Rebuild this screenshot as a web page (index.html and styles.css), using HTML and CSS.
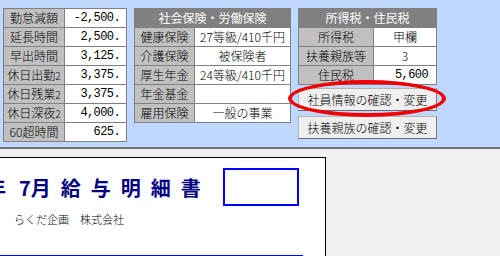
FILE: index.html
```html
<!DOCTYPE html>
<html lang="ja">
<head>
  <meta charset="UTF-8">
  <title>給与明細書</title>
  <link rel="stylesheet" href="styles.css">
</head>
<body>
  <div class="panel">
    <table class="grid grid-left">
      <colgroup><col class="c-label"><col></colgroup>
      <tr><th>勤怠減額</th><td class="num">-2,500.</td></tr>
      <tr><th>延長時間</th><td class="num">2,500.</td></tr>
      <tr><th>早出時間</th><td class="num">3,125.</td></tr>
      <tr><th>休日出勤<small>2</small></th><td class="num">3,375.</td></tr>
      <tr><th>休日残業<small>2</small></th><td class="num">3,375.</td></tr>
      <tr><th>休日深夜<small>2</small></th><td class="num">4,000.</td></tr>
      <tr><th>60超時間</th><td class="num">625.</td></tr>
    </table>

    <table class="grid grid-mid">
      <colgroup><col class="c-label"><col></colgroup>
      <tr><th class="head" colspan="2">社会保険・労働保険</th></tr>
      <tr><th>健康保険</th><td>27等級/410千円</td></tr>
      <tr><th>介護保険</th><td>被保険者</td></tr>
      <tr><th>厚生年金</th><td>24等級/410千円</td></tr>
      <tr><th>年金基金</th><td></td></tr>
      <tr><th>雇用保険</th><td>一般の事業</td></tr>
    </table>

    <div class="tax">
      <table class="grid grid-right">
        <colgroup><col class="c-label"><col></colgroup>
        <tr><th class="head" colspan="2">所得税・住民税</th></tr>
        <tr><th>所得税</th><td>甲欄</td></tr>
        <tr><th>扶養親族等</th><td>3</td></tr>
        <tr><th>住民税</th><td class="num">5,600</td></tr>
      </table>
      <button class="btn">社員情報の確認・変更</button>
      <button class="btn">扶養親族の確認・変更</button>
      <div class="mark"></div>
    </div>
  </div>

  <div class="split"></div>

  <div class="preview">
    <div class="sheet">
      <div class="title-row">
        <h1 class="title"><span class="year">年</span>7月<span class="word">給与明細書</span></h1>
        <div class="stamp"></div>
      </div>
      <p class="company">らくだ企画　株式会社</p>
      <div class="rule"></div>
    </div>
  </div>
</body>
</html>
```

FILE: styles.css
```css
* {
  box-sizing: border-box;
  margin: 0;
  padding: 0;
}

body {
  width: 500px;
  height: 256px;
  overflow: hidden;
  background-color: #f0f0f0;
  font-family: "Noto Sans CJK JP", sans-serif;
  font-size: 12px;
  color: #000000;
}

.panel {
  display: flex;
  align-items: flex-start;
  gap: 7px;
  height: 147px;
  padding: 8px 0 0 3px;
  background-color: #c0d8ff;
}

.grid {
  border-collapse: collapse;
  table-layout: fixed;
  border: 1px solid #6f6f6f;
}

.grid tr {
  height: 19px;
}

.grid th,
.grid td {
  padding: 0;
  border: 1px solid #808080;
  line-height: 16px;
  font-weight: 300;
  text-align: center;
  white-space: nowrap;
  overflow: hidden;
}

.grid th {
  background-color: #c0c0c0;
}

.grid td {
  background-color: #ffffff;
}

.grid th.head {
  background-color: #808080;
  color: #ffffff;
  font-weight: 400;
}

.grid td.num {
  text-align: right;
  padding-right: 6px;
  font-family: "Liberation Mono", monospace;
  font-size: 12px;
  letter-spacing: -0.6px;
}

.grid small {
  font-size: 10px;
}

.grid-left {
  width: 124px;
}

.grid-left .c-label {
  width: 61px;
}

.grid-mid {
  width: 157px;
}

.grid-mid .c-label {
  width: 60px;
}

.tax {
  position: relative;
  display: flex;
  flex-direction: column;
  width: 139px;
}

.grid-right {
  width: 139px;
}

.grid-right .c-label {
  width: 75px;
}

.grid-right td.num {
  padding-right: 8px;
}

.btn {
  height: 23px;
  margin-top: 3px;
  border: 1px solid #b4b4b4;
  border-right-color: #7a7a7a;
  border-bottom-color: #6a6a6a;
  background-color: #efefef;
  font-family: "Noto Sans CJK JP", sans-serif;
  font-size: 12px;
  font-weight: 300;
  color: #000000;
}

.btn + .btn {
  margin-top: 5px;
}

/* red marker drawn over the first button */
.mark {
  position: absolute;
  left: -10px;
  top: 72px;
  width: 158px;
  height: 37px;
  border: 4px solid #f00000;
  border-radius: 50%;
}

.split {
  height: 2px;
  background-color: #707070;
}

.preview {
  padding-top: 8px;
}

.sheet {
  display: flex;
  flex-direction: column;
  width: 326px;
  height: 99px;
  background-color: #ffffff;
  border-top: 1px solid #000000;
  border-right: 1px solid #000000;
}

.title-row {
  display: flex;
  align-items: center;
  justify-content: space-between;
  padding: 10px 26px 0 0;
}

.title {
  margin-left: -14px;
  font-size: 20px;
  font-weight: 700;
  color: #000080;
  white-space: nowrap;
}

.year {
  margin-right: 13px;
}

.word {
  margin-left: 10px;
  letter-spacing: 10px;
}

.stamp {
  width: 76px;
  height: 38px;
  border: 2px solid #0000ff;
}

.company {
  margin: 5px 0 0 14px;
  font-size: 11px;
  font-weight: 300;
}

.rule {
  width: 303px;
  margin-top: auto;
  border-top: 1px solid #0000ff;
}
```
